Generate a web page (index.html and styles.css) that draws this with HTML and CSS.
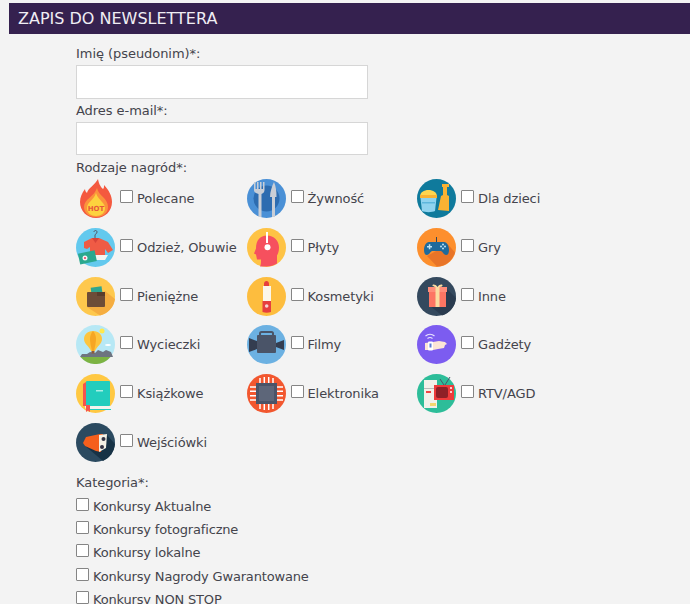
FILE: index.html
```html
<!DOCTYPE html>
<html lang="pl">
<head>
<meta charset="utf-8">
<title>Zapis do newslettera</title>
<link rel="stylesheet" href="styles.css">
</head>
<body>
<h2 class="bar">ZAPIS DO NEWSLETTERA</h2>
<form class="form">
  <label class="lab">Imię (pseudonim)*:</label>
  <input class="txt" type="text">
  <label class="lab">Adres e-mail*:</label>
  <input class="txt" type="text">
  <div class="lab lab-prizes">Rodzaje nagród*:</div>
  <div class="prizes">
    <label class="prize">
      <svg class="ico" viewBox="0 0 39 39"><path d="M22 0c1 5 2 7 5 10 1-1 1-2 1-4 5 5 8 11 8 17 0 9-7 16-16 16S4 32 4 23c0-5 2-9 5-13 0 2 1 3 2 4 1-5 8-8 11-14z" fill="#f4593f"/><path d="M21 9c1 4 3 6 6 9 3 3 5 6 5 10 0 6-5 10-12 10S8 34 8 28c0-8 10-10 13-19z" fill="#fb923c"/><path d="M20 14c1 4 4 6 6 9 2 2 3 4 3 6 0 5-4 8-9 8s-9-3-9-8c0-6 7-8 9-15z" fill="#fdd23e"/><text x="20" y="32" class="hot">HOT</text></svg>
      <input class="cb" type="checkbox"><span class="name">Polecane</span>
    </label>
    <label class="prize">
      <svg class="ico" viewBox="0 0 39 39"><circle cx="19.500" cy="19.500" r="19.500" fill="#4a90d6"/><circle cx="19.500" cy="19.500" r="13" fill="#2d6cb0"/><path d="M7 3h1.500v7H10V3h1.500v7H13V3h1.500v7H16V3h1.500v8c0 2-1 3-3 4v23h-3V15c-3-1-4.500-2-4.500-4z" fill="#c9ced6"/><path d="M27 3c2 5 2.500 9 2.500 15H28v20h-3V18h-2c0-5 2-11 4-15z" fill="#c9ced6"/></svg>
      <input class="cb" type="checkbox"><span class="name">Żywność</span>
    </label>
    <label class="prize">
      <svg class="ico" viewBox="0 0 39 39"><circle cx="19.500" cy="19.500" r="19.500" fill="#0f7a9c"/><path d="M3 18c0-5 4-7 8.500-7S20 13 20 18z" fill="#ffd54f"/><rect x="3" y="16" width="17" height="3" fill="#f9b233"/><path d="M3.500 19h16L18 32c-3 1.500-10 1.500-13 0z" fill="#8fd3ef"/><path d="M5 23h13v1.500H5z" fill="#5cb6dc"/><path d="M25 5h7v3h-2v8l2 1v15l-11-1 3-14 2-1V8h-1z" fill="#f9b233"/></svg>
      <input class="cb" type="checkbox"><span class="name">Dla dzieci</span>
    </label>

    <label class="prize">
      <svg class="ico" viewBox="0 0 39 39"><circle cx="19.500" cy="19.500" r="19.500" fill="#63c9ee"/><path d="M19 10V7c0-1 2-1 2-3s-3-2-3 0" fill="none" stroke="#556" stroke-width="1"/><path d="M8 14l8-4h7l9 4 5 8-5 3-3-4v10H14V19l-3 2-3-1z" fill="#ef5b45"/><path d="M16 10h7l-3.500 5z" fill="#d7443a"/><path d="M14 27h18l-3 5H14z" fill="#f4f4f0"/><rect x="3" y="24" width="17" height="11" transform="rotate(-12 11 30)" fill="#2aa88e"/><circle cx="9" cy="30" r="2.500" fill="#f4f4f4"/><circle cx="9" cy="30" r="1" fill="#e35"/></svg>
      <input class="cb" type="checkbox"><span class="name">Odzież, Obuwie</span>
    </label>
    <label class="prize">
      <svg class="ico" viewBox="0 0 39 39"><circle cx="19.500" cy="19.500" r="19.500" fill="#fec345"/><path d="M13 38.500c1-2 1-4 1-7l-4 0-1-5-2-1 2-5c0-8 4-13 11-13s12 5 12 12c0 4-1 6-2 8v8c-3 2-7 3-10 3-3 0-5 0-7 0z" fill="#f6505e"/><rect x="19" y="4" width="2" height="11" fill="#fff"/><circle cx="20.500" cy="19.300" r="3" fill="#fff"/></svg>
      <input class="cb" type="checkbox"><span class="name">Płyty</span>
    </label>
    <label class="prize">
      <svg class="ico" viewBox="0 0 39 39"><circle cx="19.500" cy="19.500" r="19.500" fill="#fd8f2d"/><path d="M10 28l10 10.500a19.500 19.500 0 0 0 18-14l-7-8z" fill="#e87428"/><rect x="19" y="9" width="1" height="6" fill="#345"/><path d="M12 14h15c3 0 5 4 5 8 0 3-1 5-3 5s-3-3-5-4H15c-2 1-3 4-5 4s-3-2-3-5c0-4 2-8 5-8z" fill="#1f6a9b"/><path d="M10 18h5v1.500h-5zM11.800 16.300h1.500v5h-1.500z" fill="#bfe3f6"/><circle cx="26" cy="16.500" r="1" fill="#bfe3f6"/><circle cx="26" cy="20.500" r="1" fill="#bfe3f6"/><circle cx="24" cy="18.500" r="1" fill="#bfe3f6"/><circle cx="28" cy="18.500" r="1" fill="#bfe3f6"/></svg>
      <input class="cb" type="checkbox"><span class="name">Gry</span>
    </label>

    <label class="prize">
      <svg class="ico" viewBox="0 0 39 39"><circle cx="19.500" cy="19.500" r="19.500" fill="#fec84d"/><path d="M29 14l10 8a19.500 19.500 0 0 1-15 16.500L11 30z" fill="#f5ad40"/><rect x="15" y="10" width="11" height="7" transform="rotate(-8 20 13)" fill="#2fa58f"/><rect x="11" y="15" width="18" height="15" rx="1" fill="#6d4c37"/><rect x="21" y="15" width="8" height="4" fill="#5a3d2c"/></svg>
      <input class="cb" type="checkbox"><span class="name">Pieniężne</span>
    </label>
    <label class="prize">
      <svg class="ico" viewBox="0 0 39 39"><circle cx="19.500" cy="19.500" r="19.500" fill="#fdbd3e"/><path d="M17 9V7c0-2 1-3 2.500-3S22 5 22 7v2z" fill="#e63e3e"/><rect x="16" y="9" width="8" height="15" fill="#fbf6ea"/><path d="M15.500 24h8.500v11c-3 1-5.500 1-8.500 0z" fill="#e63e3e"/><circle cx="19.700" cy="29" r="1.800" fill="#f5d4d4"/></svg>
      <input class="cb" type="checkbox"><span class="name">Kosmetyki</span>
    </label>
    <label class="prize">
      <svg class="ico" viewBox="0 0 39 39"><circle cx="19.500" cy="19.500" r="19.500" fill="#34495e"/><path d="M29 11l10 10a19.500 19.500 0 0 1-14 17.500L12 28z" fill="#2a3b4f"/><rect x="12" y="14" width="17" height="16" fill="#fd7563"/><rect x="11" y="10" width="19" height="5" fill="#ff8d7a"/><rect x="18.500" y="10" width="4" height="20" fill="#fbdca0"/><path d="M20.500 10c-2-3-5-3-5-1.500s3 1.500 5 1.500c2 0 5 0 5-1.500s-3-1.500-5 1.500z" fill="#fbdca0"/></svg>
      <input class="cb" type="checkbox"><span class="name">Inne</span>
    </label>

    <label class="prize">
      <svg class="ico" viewBox="0 0 39 39"><circle cx="19.500" cy="19.500" r="19.500" fill="#b7e8f5"/><path d="M4 32l2-3 5 0 3-2 5 1 3-3 5 2 3-2 5 2 2 5z" fill="#6d7480"/><path d="M4.500 32h30a19.500 19.500 0 0 1-30 0z" fill="#7cb342"/><path d="M17 6c-6 0-9 4-9 8 0 5 5 7 7 12h4c2-5 7-7 7-12 0-4-3-8-9-8z" fill="#fdc43e"/><path d="M17 6c-2 2-3 5-3 8s1 8 2 12h2c1-4 2-9 2-12s-1-6-3-8z" fill="#f6a623"/><rect x="15.500" y="26" width="3" height="2.500" fill="#8a5a3c"/><circle cx="26" cy="6" r="2.500" fill="#ffe94d"/><ellipse cx="32" cy="20" rx="3" ry="1" fill="#fff"/></svg>
      <input class="cb" type="checkbox"><span class="name">Wycieczki</span>
    </label>
    <label class="prize">
      <svg class="ico" viewBox="0 0 39 39"><circle cx="19.500" cy="19.500" r="19.500" fill="#6cb1e2"/><rect x="13" y="7" width="13" height="4" rx="1.500" fill="none" stroke="#4a5468" stroke-width="2"/><rect x="10" y="10" width="19" height="18" rx="1" fill="#4a5468"/><path d="M10 16L2 13v14l8-3zM29 18l8-3v10l-8-3z" fill="#343d50"/></svg>
      <input class="cb" type="checkbox"><span class="name">Filmy</span>
    </label>
    <label class="prize">
      <svg class="ico" viewBox="0 0 39 39"><circle cx="19.500" cy="19.500" r="19.500" fill="#7c5cf0"/><path d="M8 18l8-1 6-1 6 1 2 2-2 1-1 3-6 1-5 1-8 0z" fill="#fbe5d6"/><rect x="11" y="16.500" width="5" height="9" rx="1" fill="#fff"/><rect x="12.500" y="18.500" width="2" height="4" fill="#5a7bd8"/><path d="M8.500 11a7 7 0 0 1 9 0M10.500 13.500a4 4 0 0 1 5 0" fill="none" stroke="#e8e2ff" stroke-width="1.200"/></svg>
      <input class="cb" type="checkbox"><span class="name">Gadżety</span>
    </label>

    <label class="prize">
      <svg class="ico" viewBox="0 0 39 39"><circle cx="19.500" cy="19.500" r="19.500" fill="#ffc842"/><path d="M7 10l3-2v24H7z" fill="#f6544e"/><rect x="10" y="7" width="24" height="25" rx="1" fill="#22cdbd"/><path d="M9 32h26v3H10c-1 0-1-3-1-3z" fill="#f4f4ee"/><rect x="13" y="35" width="22" height="1" fill="#22cdbd"/><path d="M10 31h4v7l-2-1.500-2 1.500z" fill="#f6544e"/><rect x="20" y="16" width="7" height="1.500" fill="#a8efe6"/></svg>
      <input class="cb" type="checkbox"><span class="name">Książkowe</span>
    </label>
    <label class="prize">
      <svg class="ico" viewBox="0 0 39 39"><circle cx="19.500" cy="19.500" r="19.500" fill="#f2572f"/><path d="M13 4v31M17.300 3v33M21.700 3v33M26 4v31M3 13h33M3 17.300h33M3 21.700h33M3 26h33" stroke="#fff" stroke-width="1.500"/><rect x="9" y="9" width="21" height="21" fill="#4a5468"/><rect x="12" y="12" width="15" height="15" fill="#5d6679"/></svg>
      <input class="cb" type="checkbox"><span class="name">Elektronika</span>
    </label>
    <label class="prize">
      <svg class="ico" viewBox="0 0 39 39"><circle cx="19.500" cy="19.500" r="19.500" fill="#2dbd99"/><rect x="7" y="6" width="13" height="28" fill="#f2f1ea"/><rect x="7" y="14" width="13" height="1" fill="#bbb"/><rect x="9" y="17" width="5" height="2" fill="#ef4444"/><rect x="13" y="29" width="6" height="3" fill="#f5d76e"/><path d="M23 5l4 6M33 3l-5 8" stroke="#4a5468" stroke-width="1"/><rect x="17" y="11" width="20" height="15" fill="#ed3b3b"/><rect x="19" y="13" width="12" height="11" rx="2" fill="#8d2027"/><circle cx="34" cy="14" r="1" fill="#fff"/><circle cx="34" cy="18" r="1" fill="#fff"/></svg>
      <input class="cb" type="checkbox"><span class="name">RTV/AGD</span>
    </label>

    <label class="prize">
      <svg class="ico" viewBox="0 0 39 39"><circle cx="19.500" cy="19.500" r="19.500" fill="#2b4a60"/><path d="M8 22l19 16a19.500 19.500 0 0 0 12-17l-9-10z" fill="#173245"/><path d="M7 20l3-6 14-3 3 0-2 18-5-1-11-5z" fill="#f55f1c"/><path d="M23 12l8-1-1 14-7 4z" fill="#f4f1e5"/><circle cx="27.500" cy="16" r="2" fill="#334"/><circle cx="26" cy="24" r="2" fill="#334"/></svg>
      <input class="cb" type="checkbox"><span class="name">Wejściówki</span>
    </label>
  </div>
  <div class="lab cat-head">Kategoria*:</div>
  <div class="cats">
    <label class="cat"><input class="cb" type="checkbox"><span class="catname">Konkursy Aktualne</span></label>
    <label class="cat"><input class="cb" type="checkbox"><span class="catname">Konkursy fotograficzne</span></label>
    <label class="cat"><input class="cb" type="checkbox"><span class="catname">Konkursy lokalne</span></label>
    <label class="cat"><input class="cb" type="checkbox"><span class="catname">Konkursy Nagrody Gwarantowane</span></label>
    <label class="cat"><input class="cb" type="checkbox"><span class="catname">Konkursy NON STOP</span></label>
  </div>
</form>
</body>
</html>
```
FILE: styles.css
```css
html, body { margin: 0; height: 604px; overflow: hidden; }
body {
  background: #f3f3f3;
  color: #44444c;
  font: 13px/16px "DejaVu Sans", Verdana, sans-serif;
  padding: 3px 0 0 9px;
  box-sizing: border-box;
}
.bar {
  margin: 0;
  height: 31px;
  padding-left: 9px;
  background: #35214f;
  color: #f0eef4;
  font: 400 16px/31px "DejaVu Sans", Verdana, sans-serif;
}
.form {
  display: flex;
  flex-direction: column;
  align-items: flex-start;
  padding: 12px 0 0 67px;
}
.lab { display: block; box-sizing: border-box; height: 19px; line-height: 16px; letter-spacing: -0.05px; }
.txt {
  display: block;
  box-sizing: border-box;
  width: 292px;
  height: 33.500px;
  margin: 0 0 4px;
  padding: 0;
  background: #fff;
  border: 1px solid #d6d6d6;
  outline: none;
}
.lab-prizes { height: 20.300px; padding-top: 1px; }
.prizes {
  display: grid;
  grid-template-columns: repeat(3, 170.500px);
  grid-auto-rows: 48.700px;
}
.prize { display: flex; align-items: flex-start; letter-spacing: -0.1px; }
.ico { width: 39px; height: 39px; flex: none; margin-right: 5px; }
.cb {
  appearance: none;
  flex: none;
  box-sizing: border-box;
  width: 13px;
  height: 13px;
  margin: 0 4px 0 0;
  background: #fff;
  border: 1px solid #858585;
  border-radius: 1px;
}
.prize .cb { margin-top: 11px; }
.name { margin-top: 12px; }
.cat-head { margin-top: 3.500px; height: 18px; }
.cats { display: flex; flex-direction: column; }
.cat { display: flex; align-items: center; height: 23.200px; letter-spacing: -0.17px; }
.catname { margin-top: 5px; }
.hot { font: 700 7px "DejaVu Sans", sans-serif; fill: #e8583a; text-anchor: middle; }
```
